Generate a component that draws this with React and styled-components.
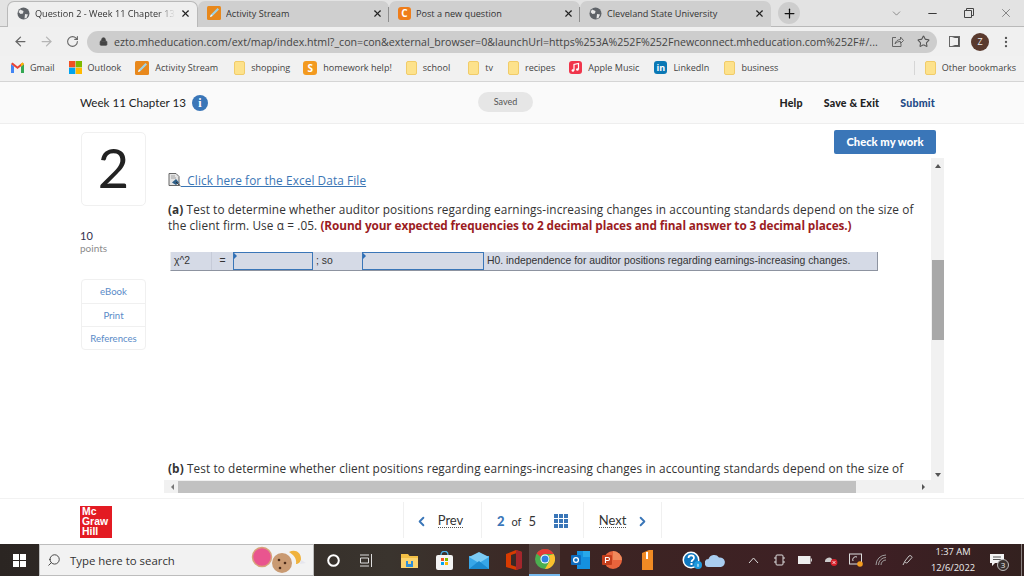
import React from "react";
import styled, { createGlobalStyle } from "styled-components";
import {
  ArrowLeft,
  ArrowRight,
  ChevronDown,
  ChevronLeft,
  ChevronRight,
  Lock,
  Minus,
  MoreVertical,
  Plus,
  RotateCw,
  Search,
  Star,
  X,
} from "lucide-react";

const GlobalStyle = createGlobalStyle`
  html, body {
    margin: 0;
    padding: 0;
    width: 1024px;
    height: 576px;
    overflow: hidden;
    background: #fff;
  }
  * { box-sizing: border-box; }
`;

const Screen = styled.div`
  width: 1024px;
  height: 576px;
  display: flex;
  flex-direction: column;
  font-family: "Open Sans", "Liberation Sans", sans-serif;
  overflow: hidden;
`;

/* browser chrome */
const TabStrip = styled.div`
  height: 27px;
  flex: none;
  display: flex;
  align-items: flex-end;
  padding-left: 7px;
  background: #e3e3e3;
  border-bottom: 1px solid #b9b9b9;
`;

const Tab = styled.div`
  width: 191px;
  height: 26px;
  flex: none;
  display: flex;
  align-items: center;
  gap: 5px;
  padding: 0 6px 2px 9px;
  font-size: 9.15px;
  color: #333;
  background: ${(p) => (p.$active ? "#efefef" : "#cfcfcf")};
  border-radius: 7px 7px 0 0;
  margin-bottom: -1px;
  border: ${(p) => (p.$active ? "1px solid #b9b9b9" : "none")};
  border-bottom: none;
  position: relative;
  z-index: ${(p) => (p.$active ? 1 : 0)};
`;

const TabTitle = styled.span`
  flex: 1;
  white-space: nowrap;
  overflow: hidden;
  mask-image: ${(p) =>
    p.$fade ? "linear-gradient(90deg, #000 88%, transparent 100%)" : "none"};
`;

const TabDivider = styled.i`
  position: absolute;
  right: 0;
  top: 6px;
  height: 15px;
  width: 1px;
  background: #8e8e8e;
`;

const NewTab = styled.div`
  width: 22px;
  height: 22px;
  margin: 0 0 2px 7px;
  border-radius: 50%;
  background: #cdcdcd;
  display: flex;
  align-items: center;
  justify-content: center;
  color: #111;
`;

const WindowButtons = styled.div`
  margin-left: auto;
  width: 146px;
  height: 26px;
  display: grid;
  grid-template-columns: 36px 37px 36px 37px;
  align-items: center;
  justify-items: center;
  color: #444;
`;

const Toolbar = styled.div`
  height: 29px;
  flex: none;
  display: flex;
  align-items: center;
  background: #f0f0f0;
  padding-left: 7px;
`;

const NavSlot = styled.div`
  width: 26px;
  display: flex;
  justify-content: center;
  color: ${(p) => (p.$dim ? "#b5b5b5" : "#666")};
`;

const Omnibox = styled.div`
  width: 850px;
  height: 22px;
  margin-left: 2px;
  border-radius: 11px;
  background: #cdcdcd;
  display: flex;
  align-items: center;
  padding: 0 7px 0 12px;
  color: #444;
  font-size: 10.63px;
`;

const UrlText = styled.span`
  margin-left: 6px;
  flex: 1;
  white-space: nowrap;
`;

const OmniIcons = styled.div`
  display: flex;
  align-items: center;
  gap: 13px;
  color: #555;
`;

const ToolRight = styled.div`
  display: flex;
  align-items: center;
  margin-left: 12px;
  gap: 10px;
`;

const PanelIcon = styled.div`
  width: 11px;
  height: 11px;
  border: 2px solid #555;
  border-left-width: 6px;
  margin-right: 1px;
  border-left-color: #f0f0f0;
  outline: 1px solid #666;
  outline-offset: -1px;
`;

const Avatar = styled.div`
  width: 18px;
  height: 18px;
  border-radius: 50%;
  background: #5a3a2e;
  color: #eee;
  font-size: 9px;
  display: flex;
  align-items: center;
  justify-content: center;
`;

const BookmarkBar = styled.div`
  height: 26px;
  flex: none;
  display: flex;
  align-items: center;
  padding: 0 0 2px 11px;
  background: #f1f1f1;
  border-bottom: 1px solid #d5d5d5;
  font-size: 9.05px;
  color: #444;
`;

const Bookmark = styled.div`
  display: flex;
  align-items: center;
  gap: ${(p) => p.$gap ?? 6}px;
  margin-right: ${(p) => p.$after ?? 14}px;
  white-space: nowrap;
`;

const BookmarkDivider = styled.i`
  width: 1px;
  height: 14px;
  background: #d6d6d6;
  margin: 0 10px 0 auto;
`;

const Tile = styled.div`
  width: ${(p) => p.$size ?? 14}px;
  height: ${(p) => p.$size ?? 14}px;
  flex: none;
  border-radius: 3px;
  background: ${(p) => p.$bg};
  color: #fff;
  font-weight: 700;
  font-size: ${(p) => p.$font ?? 10}px;
  line-height: 1;
  display: flex;
  align-items: center;
  justify-content: center;
`;

const FolderMark = styled.i`
  width: 11px;
  height: 14px;
  flex: none;
  background: #fde28c;
  border: 1px solid #f1cc69;
  border-radius: 2px;
`;

/* assessment page */
const PageHeader = styled.div`
  height: 42px;
  flex: none;
  display: flex;
  align-items: center;
  position: relative;
  padding: 0 89px 0 80px;
  background: #fafafa;
  border-bottom: 1px solid #eee;
  color: #222;
  font-family: Lato, "Open Sans", sans-serif;
`;

const PageTitle = styled.div`
  font-size: 11.6px;
  display: flex;
  align-items: center;
  gap: 6px;
`;

const InfoDot = styled.span`
  width: 16px;
  height: 16px;
  border-radius: 50%;
  background: #3a76b8;
  color: #fff;
  font: 700 12px/16px "Liberation Serif", serif;
  text-align: center;
`;

const SavedPill = styled.div`
  position: absolute;
  left: 478px;
  top: 10px;
  width: 55px;
  height: 20px;
  border-radius: 10px;
  background: #e6e6e6;
  color: #555;
  font-size: 9px;
  line-height: 20px;
  text-align: center;
`;

const HeaderLinks = styled.div`
  margin-left: auto;
  display: flex;
  align-items: center;
  gap: 21px;
  font-size: 10.6px;
  letter-spacing: 0.2px;
  font-weight: 900;
`;

const Submit = styled.span`
  color: #1f4a86;
`;

const Body = styled.div`
  flex: 1;
  min-height: 0;
  display: grid;
  grid-template-columns: 65px 780px;
  column-gap: 18px;
  padding-left: 81px;
`;

const Sidebar = styled.div`
  padding-top: 8px;
  font-family: Lato, "Open Sans", sans-serif;
`;

const NumberCard = styled.div`
  height: 74px;
  border: 1px solid #f0f0f0;
  border-radius: 5px;
  display: flex;
  align-items: center;
  justify-content: center;
  padding-bottom: 3px;
  font-size: 54px;
  font-weight: 400;
  color: #222;
  line-height: 1;
`;

const Points = styled.div`
  margin: 23px 0 0 -1px;
  font-size: 11px;
  line-height: 13px;
  color: #34324f;
`;

const PointsLabel = styled.div`
  font-size: 10px;
  color: #8c8c8c;
`;

const LinkCard = styled.div`
  margin-top: 24px;
  border: 1px solid #f0f0f0;
  border-radius: 4px;
`;

const SideLink = styled.div`
  height: 23px;
  display: flex;
  align-items: center;
  justify-content: center;
  font-size: 9.6px;
  color: #5a8bc8;
  & + & {
    border-top: 1px solid #f0f0f0;
  }
`;

const MainColumn = styled.div`
  display: flex;
  flex-direction: column;
  min-height: 0;
`;

const CheckRow = styled.div`
  height: 34px;
  flex: none;
  display: flex;
  justify-content: flex-end;
  align-items: flex-end;
  padding: 0 8px 4px 0;
`;

const CheckButton = styled.div`
  width: 102px;
  height: 24px;
  border-radius: 2px;
  background: #3a76b8;
  color: #fff;
  font: 900 11.2px/23px Lato, sans-serif;
  text-align: center;
`;

const ScrollPane = styled.div`
  width: 780px;
  height: 335px;
  display: grid;
  grid-template-columns: 767px 13px;
  grid-template-rows: 322px 13px;
`;

const QuestionBody = styled.div`
  overflow: hidden;
  padding: 14px 0 0 4px;
  font-family: "Open Sans", sans-serif;
  font-size: 11.8px;
  letter-spacing: 0.1px;
  color: #333;
`;

const FileLink = styled.div`
  display: flex;
  align-items: center;
  height: 16px;
  color: #3b76b5;
  text-decoration: underline;
  white-space: pre;
`;

const QuestionText = styled.p`
  margin: ${(p) => p.$top}px 0 0;
  line-height: 16px;
  width: 750px;
`;

const Urgent = styled.b`
  color: #9b1c1f;
  letter-spacing: -0.1px;
`;

const AnswerRow = styled.div`
  margin: 19px 0 0 2px;
  width: 708px;
  height: 19px;
  display: flex;
  background: #d5dae6;
  border-bottom: 1px solid #8d93a0;
  border-right: 1px solid #8d93a0;
  border-left: 1px solid #eee;
  font: 10.4px/18px "Liberation Sans", Arial, sans-serif;
  letter-spacing: 0;
  color: #333;
`;

const Cell = styled.div`
  width: ${(p) => p.$w}px;
  flex: ${(p) => (p.$w ? "none" : 1)};
  text-align: ${(p) => p.$align ?? "left"};
  padding-left: ${(p) => p.$pad ?? 3}px;
  border-right: ${(p) => (p.$line ? "1px solid #c6cbd8" : "none")};
  white-space: nowrap;
`;

const AnswerInput = styled.div`
  width: ${(p) => p.$w}px;
  flex: none;
  height: 18px;
  border: 1px solid #3a76b8;
  position: relative;
  &::before {
    content: "";
    position: absolute;
    left: 0;
    top: 0;
    border-top: 3px solid transparent;
    border-bottom: 3px solid transparent;
    border-left: 3px solid #2f6fb5;
  }
`;

const VTrack = styled.div`
  grid-row: 1 / span 2;
  grid-column: 2;
  background: #f1f1f1;
  display: flex;
  flex-direction: column;
  align-items: center;
  position: relative;
`;

const VThumb = styled.div`
  width: 12px;
  height: 80px;
  margin-top: 92px;
  background: #a8a8a8;
`;

const HTrack = styled.div`
  background: #f1f1f1;
  display: flex;
  align-items: center;
`;

const HThumb = styled.div`
  width: 678px;
  height: 12px;
  margin-left: 4px;
  background: #c1c1c1;
`;

const Arrow = styled.i`
  width: 0;
  height: 0;
  flex: none;
  border: 3px solid transparent;
  ${(p) =>
    p.$dir === "up" &&
    `border-bottom: 4px solid #555; border-top: none; margin-top: 6px;`}
  ${(p) =>
    p.$dir === "down" &&
    `border-top: 4px solid #555; border-bottom: none; position: absolute; bottom: 16px;`}
  ${(p) =>
    p.$dir === "left" &&
    `border-right: 3px solid #777; border-left: none; margin-left: 7px;`}
  ${(p) =>
    p.$dir === "right" &&
    `border-left: 3px solid #555; border-right: none; margin-left: auto; margin-right: 6px;`}
`;

const Footer = styled.div`
  height: 46px;
  flex: none;
  display: flex;
  align-items: flex-start;
  padding: 7px 0 0 80px;
  position: relative;
  border-top: 1px solid #f2f2f2;
  font-family: Lato, sans-serif;
  color: #333;
`;

const McLogo = styled.div`
  width: 32px;
  height: 32px;
  background: #e31b23;
  color: #fff;
  font: 700 10.4px/10px "Liberation Sans", sans-serif;
  padding: 1px 0 0 2px;
`;

const Pager = styled.div`
  position: absolute;
  left: 403px;
  top: 3px;
  height: 36px;
  display: flex;
  border-left: 1px solid #f0f0f0;
`;

const PagerCell = styled.div`
  width: ${(p) => p.$w}px;
  display: flex;
  align-items: center;
  justify-content: center;
  gap: ${(p) => p.$gap ?? 7}px;
  padding: 2px ${(p) => p.$right ?? 0}px 0 ${(p) => p.$left ?? 0}px;
  border-right: 1px solid #f0f0f0;
  color: #3a76b8;
`;

const PagerLink = styled.span`
  font-size: 13px;
  color: #333;
  border-bottom: 1px dotted #555;
  line-height: 13px;
`;

const PagerCount = styled.span`
  font-size: ${(p) => (p.$small ? 11 : 13)}px;
  font-weight: ${(p) => (p.$strong ? 900 : 400)};
  color: ${(p) => (p.$strong ? "#3a76b8" : "#333")};
`;

const PageGrid = styled.div`
  display: grid;
  grid-template-columns: repeat(3, 4px);
  grid-auto-rows: 4px;
  gap: 1px;
  margin-left: 11px;
`;

const PageGridDot = styled.i`
  background: #3a76b8;
`;

/* windows taskbar */
const Taskbar = styled.div`
  height: 32px;
  flex: none;
  display: flex;
  align-items: center;
  background: linear-gradient(90deg, #2b2522 0%, #3a342e 38%, #3c2523 55%, #3e1f24 85%, #33211f 100%);
  color: #eee;
`;

const StartSlot = styled.div`
  width: 39px;
  display: flex;
  justify-content: center;
`;

const WinLogo = styled.div`
  display: grid;
  grid-template-columns: 6px 6px;
  grid-auto-rows: 6px;
  gap: 1px;
`;

const WinPane = styled.i`
  background: #fff;
`;

const SearchBox = styled.div`
  width: 275px;
  height: 32px;
  flex: none;
  display: flex;
  align-items: center;
  padding-left: 7px;
  gap: 9px;
  background: #f2f2f2;
  border: 1px solid #bdbdbd;
  color: #333;
  font-size: 11.4px;
`;

const MirroredSearch = styled(Search)`
  transform: scaleX(-1);
`;

const SearchArt = styled.svg`
  margin-left: auto;
  margin-right: 3px;
`;

const TaskSlot = styled.div`
  width: ${(p) => p.$w}px;
  margin-left: ${(p) => p.$gap ?? 0}px;
  height: 32px;
  flex: none;
  display: flex;
  align-items: center;
  justify-content: center;
  position: relative;
  background: ${(p) => (p.$active ? "rgba(255,255,255,.14)" : "transparent")};
  border-bottom: ${(p) => (p.$active ? "2px solid #76b9ed" : "none")};
`;

const Clock = styled.div`
  width: 60px;
  flex: none;
  text-align: center;
  font-size: 9.3px;
  line-height: 16px;
  color: #eee;
  margin-left: 2px;
`;

const NotifyBadge = styled.span`
  position: absolute;
  left: 14px;
  top: 15px;
  width: 12px;
  height: 12px;
  border-radius: 50%;
  background: #3a3230;
  border: 1px solid #bbb;
  color: #eee;
  font-size: 8px;
  line-height: 10px;
  text-align: center;
`;

const ShowDesktop = styled.i`
  width: 1px;
  height: 32px;
  margin: 0 2px 0 auto;
  background: #8a8280;
`;

const GlobeIcon = () => (
  <svg width="13" height="13" viewBox="0 0 13 13">
    <circle cx="6.500" cy="6.500" r="6" fill="#5f6368" />
    <path d="M3 2.500 6.500 4 6 6.500 3.500 7 1.500 5zM8 7l3 .5-1.500 3.500-2 .5z" fill="#e8e8e8" />
  </svg>
);

const PencilIcon = () => (
  <svg width="14" height="14" viewBox="0 0 14 14">
    <rect width="14" height="14" rx="1.500" fill="#e8881c" />
    <path d="M3 11 4 8.500 10.500 2 12 3.500 5.500 10z" fill="#9ed3e8" />
    <path d="M3 11 4 8.500 5.500 10z" fill="#fff" />
  </svg>
);

const GmailIcon = () => (
  <svg width="13" height="11" viewBox="0 0 13 11">
    <path d="M0 2v9h3V4.500z" fill="#4285f4" />
    <path d="M13 2v9h-3V4.500z" fill="#34a853" />
    <path d="M0 2 1.500.5 6.500 4.500 11.500.5 13 2 6.500 7z" fill="#ea4335" />
    <path d="M10 4.500 13 2 11.500.5 10 1.700z" fill="#fbbc04" />
  </svg>
);

const OutlookSquares = () => (
  <svg width="13" height="13" viewBox="0 0 13 13">
    <rect width="6.300" height="6.300" fill="#f25022" />
    <rect x="6.700" width="6.300" height="6.300" fill="#7fba00" />
    <rect y="6.700" width="6.300" height="6.300" fill="#00a4ef" />
    <rect x="6.700" y="6.700" width="6.300" height="6.300" fill="#ffb900" />
  </svg>
);

const NoteIcon = () => (
  <svg width="13" height="13" viewBox="0 0 13 13">
    <rect width="13" height="13" rx="3" fill="#f0354b" />
    <path d="M5 9.500V3.500L9.500 2.500V8.500" fill="none" stroke="#fff" strokeWidth="1.200" />
    <circle cx="3.900" cy="9.500" r="1.300" fill="#fff" />
    <circle cx="8.400" cy="8.500" r="1.300" fill="#fff" />
  </svg>
);

const ShareIcon = () => (
  <svg width="13" height="13" viewBox="0 0 13 13" fill="none" stroke="#666" strokeWidth="1">
    <path d="M5 2.500H1.500v9h8.500V8.500" />
    <path d="M4 9c.5-3 3-4.500 5.500-4.500V2L12.500 5.500 9.500 8.500V6.500C7.500 6.500 5.500 7 4 9z" />
  </svg>
);

const ExcelFileIcon = () => (
  <svg width="13" height="14" viewBox="0 0 13 14">
    <path d="M1 .5h7l3 3v9H1z" fill="#e4e4e4" stroke="#666" />
    <path d="M3 3h4M3 5h5" stroke="#888" strokeWidth=".7" />
    <path d="M4 9.500 8 6l3 3.500-3 2.500z" fill="#2f5f88" />
    <path d="M8 9 12.500 13" stroke="#333" />
  </svg>
);

const TaskIcons = {
  cortana: (
    <svg width="13" height="13" viewBox="0 0 13 13">
      <circle cx="6.500" cy="6.500" r="5.300" fill="none" stroke="#fff" strokeWidth="2" />
    </svg>
  ),
  taskView: (
    <svg width="14" height="13" viewBox="0 0 14 13" fill="none" stroke="#ddd" strokeWidth="1">
      <path d="M1 1h9M1 12h9M1.500 4h8v5h-8zM12.500 0v13" />
    </svg>
  ),
  explorer: (
    <svg width="17" height="15" viewBox="0 0 17 15">
      <path d="M0 1h7l1.500 2H17v12H0z" fill="#f2bf45" />
      <rect y="5" width="17" height="10" fill="#fbd46d" />
      <rect x="5" y="8" width="7" height="6" fill="#2f8fd8" />
      <rect x="7" y="8" width="3" height="3" fill="#fbd46d" />
    </svg>
  ),
  store: (
    <svg width="19" height="19" viewBox="0 0 19 19">
      <path d="M6 4c0-5 7-5 7 0" fill="none" stroke="#4ab0e8" strokeWidth="1.300" />
      <rect x="1" y="4" width="17" height="15" rx="2" fill="#f4f4f4" />
      <rect x="6" y="7" width="3" height="3" fill="#f25022" />
      <rect x="10" y="7" width="3" height="3" fill="#7fba00" />
      <rect x="6" y="11" width="3" height="3" fill="#00a4ef" />
      <rect x="10" y="11" width="3" height="3" fill="#ffb900" />
    </svg>
  ),
  mail: (
    <svg width="20" height="17" viewBox="0 0 20 17">
      <rect y="4" width="20" height="13" fill="#37a6e8" />
      <path d="M0 5 10 0l10 5-10 6z" fill="#7ccbf5" />
      <path d="M0 17 10 9l10 8z" fill="#1c8ad0" />
    </svg>
  ),
  office: (
    <svg width="16" height="20" viewBox="0 0 16 20">
      <path d="M0 4 10 0l6 2v16l-6 2-10-3zM5 5v10l6 2V3z" fill="#d83b01" />
      <path d="M10 0l6 2v16l-6 2z" fill="#a4262c" />
    </svg>
  ),
  chrome: (
    <svg width="20" height="20" viewBox="0 0 20 20">
      <circle cx="10" cy="10" r="10" fill="#4caf50" />
      <path d="M10 0a10 10 0 0 1 8.700 5H10a5 5 0 0 0-4.500 2.800L1.600 4.500A10 10 0 0 1 10 0z" fill="#e53935" />
      <path d="M18.700 5A10 10 0 0 1 10 20l4.300-7.500A5 5 0 0 0 13.500 6.500z" fill="#fbc02d" />
      <circle cx="10" cy="10" r="4.500" fill="#fff" />
      <circle cx="10" cy="10" r="3.500" fill="#2f7fe0" />
    </svg>
  ),
  outlook: (
    <svg width="19" height="18" viewBox="0 0 19 18">
      <rect x="6" width="13" height="18" fill="#1490df" />
      <rect x="12" y="0" width="7" height="6" fill="#28a8ea" />
      <rect y="4" width="10" height="10" rx="1" fill="#0f6cbd" />
      <circle cx="5" cy="9" r="2.400" fill="none" stroke="#fff" strokeWidth="1.300" />
    </svg>
  ),
  powerpoint: (
    <svg width="20" height="18" viewBox="0 0 20 18">
      <circle cx="11" cy="9" r="9" fill="#e8643c" />
      <path d="M11 0a9 9 0 0 1 9 9h-9z" fill="#f08a5c" />
      <rect y="4" width="10" height="10" rx="1" fill="#c43e1c" />
      <path d="M3.500 12V6.500h2.500a1.500 1.500 0 0 1 0 3H3.500" fill="none" stroke="#fff" strokeWidth="1.100" />
    </svg>
  ),
  marker: (
    <svg width="13" height="20" viewBox="0 0 13 20">
      <path d="M1 3 8 0h4v20H1z" fill="#f08a24" />
      <rect x="5" y="2" width="2" height="7" fill="#fff" />
    </svg>
  ),
  help: (
    <svg width="20" height="19" viewBox="0 0 20 19">
      <circle cx="9" cy="9" r="8.500" fill="#fff" />
      <circle cx="9" cy="9" r="7" fill="#0f78c0" />
      <path d="M6.500 7c0-3.500 5.500-3.500 5.500 0 0 2-2.500 2-2.500 4" fill="none" stroke="#fff" strokeWidth="1.700" />
      <rect x="8.500" y="12" width="2" height="2" fill="#fff" />
      <circle cx="16" cy="14" r="4" fill="#1d9be0" />
      <rect x="15.500" y="12.800" width="1" height="3" fill="#fff" />
    </svg>
  ),
  cloud: (
    <svg width="20" height="13" viewBox="0 0 20 13">
      <path d="M4 13a4 4 0 0 1-.5-8A6 6 0 0 1 14 3.500 4.800 4.800 0 0 1 16 13z" fill="#a9cdf0" />
    </svg>
  ),
  chevron: (
    <svg width="11" height="7" viewBox="0 0 11 7" fill="none" stroke="#ddd" strokeWidth="1">
      <path d="M1 6 5.500 1 10 6" />
    </svg>
  ),
  phone: (
    <svg width="11" height="14" viewBox="0 0 11 14" fill="none" stroke="#ddd" strokeWidth="1">
      <rect x="2" y="2" width="7" height="10" rx="1" />
      <path d="M0 5h2M9 5h2M0 9h2M9 9h2" />
    </svg>
  ),
  battery: (
    <svg width="14" height="8" viewBox="0 0 14 8">
      <rect width="12.500" height="8" fill="#eee" />
      <rect x="13" y="2.500" width="1" height="3" fill="#ccc" />
    </svg>
  ),
  onedrive: (
    <svg width="14" height="12" viewBox="0 0 14 12">
      <path d="M1 8a4 4 0 0 1 7-3l1 3z" fill="#ccc" />
      <circle cx="10" cy="8.500" r="3.400" fill="#d8212b" />
      <path d="M8.600 7.100l2.800 2.800M11.400 7.100 8.600 9.900" stroke="#fff" strokeWidth=".8" />
    </svg>
  ),
  capture: (
    <svg width="14" height="14" viewBox="0 0 14 14">
      <rect x=".5" y="1" width="12" height="10" fill="none" stroke="#ddd" />
      <path d="M4 8a3 3 0 0 1 4-4" fill="none" stroke="#ddd" />
      <circle cx="11" cy="11" r="2.800" fill="#f39c1f" />
    </svg>
  ),
  wifi: (
    <svg width="12" height="12" viewBox="0 0 12 12" fill="none" stroke="#aaa" strokeWidth=".9">
      <path d="M1 11a10 10 0 0 1 10-10M3.500 11A7.500 7.500 0 0 1 11 3.500M6 11a5 5 0 0 1 5-5" />
    </svg>
  ),
  pen: (
    <svg width="12" height="12" viewBox="0 0 12 12" fill="none" stroke="#ccc" strokeWidth="1">
      <path d="M1 11 3 7l4-5c1-1 3 0 3 1.500L6 8c-1 1.500-2.500 1-3 0" />
    </svg>
  ),
  notify: (
    <svg width="15" height="13" viewBox="0 0 15 13">
      <path d="M0 0h14v9H5l-3 3V9H0z" fill="#f4f4f4" />
      <path d="M3 3h8M3 5.500h8" stroke="#555" />
    </svg>
  ),
};

const tabs = [
  { title: "Question 2 - Week 11 Chapter 13", icon: <GlobeIcon />, active: true },
  { title: "Activity Stream", icon: <PencilIcon />, divider: true },
  {
    title: "Post a new question",
    icon: <Tile $bg="#ef7d1a" $size={13}>C</Tile>,
    divider: true,
  },
  { title: "Cleveland State University", icon: <GlobeIcon /> },
];

const taskSlots = [
  { name: "cortana", width: 38 },
  { name: "taskView", width: 28 },
  { name: "explorer", width: 34, gap: 12 },
  { name: "store", width: 34, gap: 1 },
  { name: "mail", width: 34, gap: 1 },
  { name: "office", width: 30, gap: 3 },
  { name: "chrome", width: 31, active: true },
  { name: "outlook", width: 34, gap: 3 },
  { name: "powerpoint", width: 30 },
  { name: "marker", width: 30, gap: 5 },
  { name: "help", width: 24, gap: 18 },
  { name: "cloud", width: 22 },
  { name: "chevron", width: 26, gap: 14 },
  { name: "phone", width: 26 },
  { name: "battery", width: 26 },
  { name: "onedrive", width: 25 },
  { name: "capture", width: 25 },
  { name: "wifi", width: 26 },
  { name: "pen", width: 26, gap: 1 },
];

function App() {
  return (
    <Screen>
      <GlobalStyle />
      <TabStrip>
        {tabs.map((tab) => (
          <Tab key={tab.title} $active={tab.active}>
            {tab.icon}
            <TabTitle $fade={tab.active}>{tab.title}</TabTitle>
            <X size={11} strokeWidth={2.500} color="#222" />
            {tab.divider && <TabDivider />}
          </Tab>
        ))}
        <NewTab>
          <Plus size={15} strokeWidth={2} />
        </NewTab>
        <WindowButtons>
          <ChevronDown size={13} strokeWidth={1} />
          <Minus size={13} strokeWidth={1.500} color="#111" />
          <svg width="10" height="10" viewBox="0 0 10 10" fill="none" stroke="#444">
            <path d="M.5 2.500h7v7h-7zM2.500 2.500v-2h7v7h-2" />
          </svg>
          <X size={14} strokeWidth={1} />
        </WindowButtons>
      </TabStrip>
      <Toolbar>
        <NavSlot>
          <ArrowLeft size={15} />
        </NavSlot>
        <NavSlot $dim>
          <ArrowRight size={15} />
        </NavSlot>
        <NavSlot>
          <RotateCw size={13} />
        </NavSlot>
        <Omnibox>
          <Lock size={9} fill="#444" />
          <UrlText>
            ezto.mheducation.com/ext/map/index.html?_con=con&amp;external_browser=0&amp;launchUrl=https%253A%252F%252Fnewconnect.mheducation.com%252F#/...
          </UrlText>
          <OmniIcons>
            <ShareIcon />
            <Star size={13} />
          </OmniIcons>
        </Omnibox>
        <ToolRight>
          <PanelIcon />
          <Avatar>Z</Avatar>
          <MoreVertical size={14} color="#555" />
        </ToolRight>
      </Toolbar>
      <BookmarkBar>
        <Bookmark><GmailIcon />Gmail</Bookmark>
        <Bookmark><OutlookSquares />Outlook</Bookmark>
        <Bookmark $after={16}><PencilIcon />Activity Stream</Bookmark>
        <Bookmark $after={13}><FolderMark />shopping</Bookmark>
        <Bookmark $after={14}><Tile $bg="#f39a1f">S</Tile>homework help!</Bookmark>
        <Bookmark $after={18}><FolderMark />school</Bookmark>
        <Bookmark $after={15}><FolderMark />tv</Bookmark>
        <Bookmark><FolderMark />recipes</Bookmark>
        <Bookmark $after={15}><NoteIcon />Apple Music</Bookmark>
        <Bookmark $after={15}><Tile $bg="#0a78b5" $size={13} $font={9}>in</Tile>LinkedIn</Bookmark>
        <Bookmark $after={0}><FolderMark />business</Bookmark>
        <BookmarkDivider />
        <Bookmark $after={8}><FolderMark />Other bookmarks</Bookmark>
      </BookmarkBar>
      <PageHeader>
        <PageTitle>
          Week 11 Chapter 13 <InfoDot>i</InfoDot>
        </PageTitle>
        <SavedPill>Saved</SavedPill>
        <HeaderLinks>
          <span>Help</span>
          <span>Save &amp; Exit</span>
          <Submit>Submit</Submit>
        </HeaderLinks>
      </PageHeader>
      <Body>
        <Sidebar>
          <NumberCard>2</NumberCard>
          <Points>
            10
            <PointsLabel>points</PointsLabel>
          </Points>
          <LinkCard>
            <SideLink>eBook</SideLink>
            <SideLink>Print</SideLink>
            <SideLink>References</SideLink>
          </LinkCard>
        </Sidebar>
        <MainColumn>
          <CheckRow>
            <CheckButton>Check my work</CheckButton>
          </CheckRow>
          <ScrollPane>
            <QuestionBody>
              <FileLink>
                <ExcelFileIcon />
                {"  Click here for the Excel Data File"}
              </FileLink>
              <QuestionText $top={13}>
                <b>(a)</b> Test to determine whether auditor positions regarding earnings-increasing changes in accounting standards depend on the size of the client firm. Use α = .05. <Urgent>(Round your expected frequencies to 2 decimal places and final answer to 3 decimal places.)</Urgent>
              </QuestionText>
              <AnswerRow>
                <Cell $w={41} $line>χ^2</Cell>
                <Cell $w={21} $align="center" $pad={0}>=</Cell>
                <AnswerInput $w={80} />
                <Cell $w={49}>; so</Cell>
                <AnswerInput $w={122} />
                <Cell>H0. independence for auditor positions regarding earnings-increasing changes.</Cell>
              </AnswerRow>
              <QuestionText $top={189}>
                <b>(b)</b> Test to determine whether client positions regarding earnings-increasing changes in accounting standards depend on the size of
              </QuestionText>
            </QuestionBody>
            <VTrack>
              <Arrow $dir="up" />
              <VThumb />
              <Arrow $dir="down" />
            </VTrack>
            <HTrack>
              <Arrow $dir="left" />
              <HThumb />
              <Arrow $dir="right" />
            </HTrack>
          </ScrollPane>
        </MainColumn>
      </Body>
      <Footer>
        <McLogo>Mc<br />Graw<br />Hill</McLogo>
        <Pager>
          <PagerCell $w={78} $gap={9} $right={8}>
            <ChevronLeft size={15} strokeWidth={3} />
            <PagerLink>Prev</PagerLink>
          </PagerCell>
          <PagerCell $w={102}>
            <PagerCount $strong>2</PagerCount>
            <PagerCount $small>of</PagerCount>
            <PagerCount>5</PagerCount>
            <PageGrid>
              {Array.from({ length: 9 }, (_, i) => (
                <PageGridDot key={i} />
              ))}
            </PageGrid>
          </PagerCell>
          <PagerCell $w={78} $gap={9} $left={4}>
            <PagerLink>Next</PagerLink>
            <ChevronRight size={15} strokeWidth={3} />
          </PagerCell>
        </Pager>
      </Footer>
      <Taskbar>
        <StartSlot>
          <WinLogo>
            <WinPane /><WinPane /><WinPane /><WinPane />
          </WinLogo>
        </StartSlot>
        <SearchBox>
          <MirroredSearch size={14} strokeWidth={1.500} />
          Type here to search
          <SearchArt width="60" height="30" viewBox="0 0 60 30">
            <circle cx="12" cy="12" r="9.500" fill="#e9558f" stroke="#d8a27a" strokeWidth="1.500" />
            <circle cx="32" cy="18" r="10" fill="#c99a72" />
            <circle cx="29" cy="15" r="1.300" fill="#4b2c1a" />
            <circle cx="35" cy="18" r="1.300" fill="#4b2c1a" />
            <circle cx="30" cy="23" r="1.300" fill="#4b2c1a" />
            <path d="M39 7c6-3 12 0 12 7 0 3-3 5-5 5 1-5-2-9-7-12z" fill="#f0b23c" />
            <path d="M51 15l5 3-6 1z" fill="#e6e6ee" />
          </SearchArt>
        </SearchBox>
        {taskSlots.map((slot) => (
          <TaskSlot key={slot.name} $w={slot.width} $gap={slot.gap} $active={slot.active}>
            {TaskIcons[slot.name]}
          </TaskSlot>
        ))}
        <Clock>
          1:37 AM
          <br />
          12/6/2022
        </Clock>
        <TaskSlot $w={28}>
          {TaskIcons.notify}
          <NotifyBadge>3</NotifyBadge>
        </TaskSlot>
        <ShowDesktop />
      </Taskbar>
    </Screen>
  );
}

export default App;
